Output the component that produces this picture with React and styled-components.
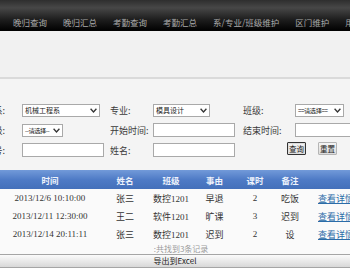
import React from "react";
import styled, { createGlobalStyle } from "styled-components";

const menu = ["晚归查询", "晚归汇总", "考勤查询", "考勤汇总", "系/专业/班级维护", "区门维护", "用户管理"];

const records = [
  { time: "2013/12/6 10:10:00", name: "张三", cls: "数控1201", reason: "早退", hours: 2, note: "吃饭" },
  { time: "2013/12/11 12:30:00", name: "王二", cls: "软件1201", reason: "旷课", hours: 3, note: "迟到" },
  { time: "2013/12/14 20:11:11", name: "张三", cls: "数控1201", reason: "迟到", hours: 2, note: "设" },
];

const Chevron = () => (
  <svg width="7" height="5" viewBox="0 0 7 5" style={{ flex: "none" }}>
    <polyline points="0.6,0.8 3.5,4 6.4,0.8" fill="none" stroke="#333" strokeWidth="1.3" />
  </svg>
);

const App = () => {
  return (
    <>
      <GlobalStyle />
      <Page>
        <Nav>
          {menu.map((m) => (
            <NavItem key={m}>{m}</NavItem>
          ))}
        </Nav>
        <Banner />
        <FormGrid>
          <Label $first>系:</Label>
          <Select $w={78}>
            <SelectText>机械工程系</SelectText>
            <Chevron />
          </Select>
          <Label>专业:</Label>
          <Select $w={57}>
            <SelectText>模具设计</SelectText>
            <Chevron />
          </Select>
          <Label>班级:</Label>
          <Select $w={49}>
            <SelectText $tight>==请选择==</SelectText>
            <Chevron />
          </Select>

          <Label $first>年级:</Label>
          <Select $w={41}>
            <SelectText $tight>--请选择--</SelectText>
            <Chevron />
          </Select>
          <Label>开始时间:</Label>
          <Input />
          <Label>结束时间:</Label>
          <Input $w={60} />

          <Label $first>学号:</Label>
          <Input />
          <Label>姓名:</Label>
          <Input />
          <span />
          <Buttons>
            <Button $primary>查询</Button>
            <Button>重置</Button>
          </Buttons>
        </FormGrid>

        <Table>
          <colgroup>
            <col style={{ width: 100 }} />
            <col style={{ width: 50 }} />
            <col style={{ width: 42 }} />
            <col style={{ width: 45 }} />
            <col style={{ width: 36 }} />
            <col style={{ width: 34 }} />
            <col style={{ width: 93 }} />
          </colgroup>
          <thead>
            <tr>
              <Th>时间</Th>
              <Th>姓名</Th>
              <Th>班级</Th>
              <Th>事由</Th>
              <Th>课时</Th>
              <Th>备注</Th>
              <Th />
            </tr>
          </thead>
          <tbody>
            {records.map((r) => (
              <tr key={r.time}>
                <Td>{r.time}</Td>
                <Td>{r.name}</Td>
                <Td>{r.cls}</Td>
                <Td>{r.reason}</Td>
                <Td>{r.hours}</Td>
                <Td>{r.note}</Td>
                <LinkCell>
                  <a href="#">查看详情</a>
                </LinkCell>
              </tr>
            ))}
          </tbody>
        </Table>
        <Summary>:共找到3条记录</Summary>
        <ExportBar>导出到Excel</ExportBar>
        <Filler />
      </Page>
    </>
  );
};

const GlobalStyle = createGlobalStyle`
  html, body {
    margin: 0;
    padding: 0;
    overflow: hidden;
    background: #fff;
  }
  body {
    font-family: "Noto Sans CJK SC", "Liberation Sans", sans-serif;
  }
`;

const Page = styled.div`
  width: 350px;
  height: 280px;
  overflow: hidden;
  background: #f4f4f4;
  display: flex;
  flex-direction: column;
`;

const Nav = styled.nav`
  height: 31px;
  flex: none;
  display: flex;
  align-items: center;
  padding: 12px 0 0 5px;
  box-sizing: border-box;
  white-space: nowrap;
  background: linear-gradient(#2e2e2e 0%, #474747 25%, #1c1c1c 65%, #000 100%);
`;

const NavItem = styled.span`
  color: #a9a9a9;
  font-size: 8.5px;
  padding: 0 8px;
  flex: none;
`;

const Banner = styled.div`
  height: 46px;
  flex: none;
  background: #f1f1f1;
  border-bottom: 2px solid #dadada;
`;

const FormGrid = styled.div`
  display: grid;
  grid-template-columns: 62px 88px 43px 90px 52px 1fr;
  grid-auto-rows: 20px;
  align-items: center;
  margin: 21px 0 10px -40px;
  font-size: 9px;
  color: #333;
`;

const Label = styled.span`
  white-space: nowrap;
  text-align: ${(p) => (p.$first ? "right" : "left")};
  padding-right: ${(p) => (p.$first ? "17px" : "0")};
  color: #3a3a3a;
`;

const Select = styled.div`
  width: ${(p) => p.$w}px;
  height: 13px;
  box-sizing: border-box;
  border: 1px solid #a9a9a9;
  background: #fff;
  display: flex;
  align-items: center;
  gap: 1px;
  padding: 0 2px 0 2px;
  font-size: 7px;
  color: #222;
  white-space: nowrap;
`;

const SelectText = styled.span`
  flex: 1;
  min-width: 0;
  font-size: ${(p) => (p.$tight ? "6.2px" : "7px")};
  letter-spacing: ${(p) => (p.$tight ? "-0.4px" : "0")};
`;

const Input = styled.input`
  width: ${(p) => p.$w || 82}px;
  height: 14px;
  box-sizing: border-box;
  border: 1px solid #a9a9a9;
  background: #fff;
  padding: 0;
  margin: 0;
`;

const Buttons = styled.div`
  display: flex;
  gap: 12px;
  align-items: center;
  margin: -3px 0 0 -8px;
`;

const Button = styled.button`
  height: 13px;
  padding: 0 1px;
  font-size: 7.5px;
  line-height: 11px;
  font-family: "Noto Sans CJK SC", sans-serif;
  color: #222;
  background: linear-gradient(#f4f4f4, #dcdcdc);
  border: 1px solid ${(p) => (p.$primary ? "#333" : "#b5b5b5")};
  box-shadow: ${(p) => (p.$primary ? "inset 0 0 0 1px #ddd" : "none")};
  border-radius: 1px;
`;

const Table = styled.table`
  width: 400px;
  table-layout: fixed;
  border-collapse: collapse;
  font-family: "Liberation Serif", "Noto Sans CJK SC", serif;
  font-size: 9px;
  flex: none;
`;

const Th = styled.th`
  height: 19px;
  padding: 0;
  font-family: "Noto Sans CJK SC", sans-serif;
  font-size: 8.5px;
  font-weight: bold;
  color: #eef3fc;
  background: linear-gradient(#729ad9, #4f7bc6 50%, #4470ba);
`;

const Td = styled.td`
  height: 18px;
  padding: 0;
  text-align: center;
  color: #333;
  background: #fafafa;
  white-space: nowrap;
`;

const LinkCell = styled(Td)`
  text-align: left;
  padding-left: 11px;
  a {
    color: #2b6ca8;
    font-family: "Noto Sans CJK SC", sans-serif;
    text-decoration: underline;
  }
`;

const Summary = styled.div`
  height: 11px;
  line-height: 11px;
  text-align: center;
  padding-left: 12px;
  font-size: 8px;
  color: #9a9a9a;
  background: #fafafa;
`;

const ExportBar = styled.div`
  height: 12px;
  line-height: 12px;
  flex: none;
  text-align: center;
  font-size: 8px;
  color: #222;
  border-top: 1px solid #a5a5a5;
  border-bottom: 1px solid #a5a5a5;
  background: linear-gradient(#fbfbfb, #d8d8d8);
`;

const Filler = styled.div`
  flex: 1;
  background: #fff;
`;

export default App;
